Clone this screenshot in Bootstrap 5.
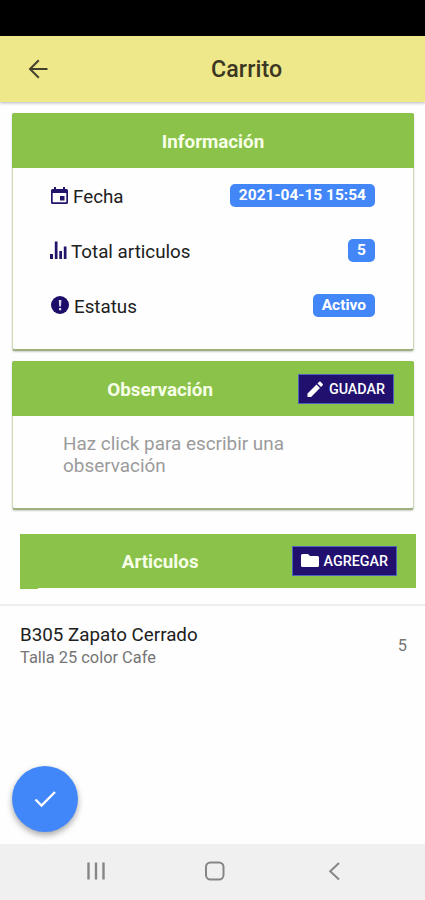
<!DOCTYPE html>
<html lang="es">
<head>
<meta charset="utf-8">
<meta name="viewport" content="width=device-width, initial-scale=1">
<title>Carrito</title>
<link href="https://cdn.jsdelivr.net/npm/bootstrap@5.3.0/dist/css/bootstrap.min.css" rel="stylesheet">
<style>
body{font-family:Roboto,"Liberation Sans",sans-serif;color:#202020;background:#fefefe;width:425px;height:900px;overflow:hidden;line-height:22px}
svg{display:block;flex:none}
.status{height:36px;background:#000}
.topbar{height:66px;background:#eee88b;box-shadow:0 1px 3px rgba(70,70,90,.4);padding:0 28px}
.topbar h1{font-size:23.2px;font-weight:500;color:#3c3722;margin:2px 0 0 163px;letter-spacing:.1px}
.panel{margin:0 11px 0 12px;border:1px solid #cfdbb4;border-bottom:2px solid #9fb07f;border-radius:3px;background:#fefefe;box-shadow:0 1px 2px rgba(0,0,0,.2)}
#info{height:238px;margin-top:11px}
#obs{margin-top:10px}
.strip{height:54px;background:#8bc34a;color:#f8ffe9;font-size:18.8px;font-weight:700}
.panel .strip{margin:-1px -1px 0;border-radius:2px 2px 0 0;width:402px;height:55px;padding-top:2px}
.strip-title{margin-right:85px}
.articles .strip-title{margin-right:93px;padding-top:1px}
.strip .action{margin-right:20px;gap:5px}
.panel .action{margin-top:-1px}
.articles .action{margin-right:19px}
.info-row{height:55px;padding:2px 38px 0 37px;font-size:18.8px}
.tag{background:#4286f8;border-radius:5px;font-size:15.5px;font-weight:700;line-height:23px;height:23px;padding:0 9px;margin-bottom:2px}
.action{background:#22106f;border:1.5px solid #4b63bd;border-radius:0;height:30px;color:#fff;font-size:14.3px;font-weight:500;line-height:28px;padding:0 8px}
.action:hover{background:#22106f;color:#fff}
.note{height:92px;padding:17px 50px 0;font-size:18.9px;color:#9b9b9b}
.articles{margin:24px 9px 0 20px}
.lip{height:1px;width:18px;margin-left:20px;background:#8bc34a}
.line{height:2px;background:#eee;margin-top:15px}
.item{padding:18px 18px 0 20px}
.item-name{font-size:18.8px}
.item-sub{font-size:16.4px;color:#757575;line-height:24px}
.item>.item-sub{margin-bottom:2px}
.confirm{width:66px;height:66px;background:#4287f9;box-shadow:0 3px 6px rgba(0,0,0,.35);margin:0 0 12px 12px;border:0}
.sysbar{height:56px;background:#f0f0f0}
</style>
<script src="https://cdn.jsdelivr.net/npm/bootstrap@5.3.0/dist/js/bootstrap.bundle.min.js"></script>
</head>
<body class="d-flex flex-column">
<div class="status flex-shrink-0"></div>
<header class="topbar d-flex align-items-center flex-shrink-0">
  <svg width="20" height="20" viewBox="0 0 20 20" fill="none" stroke="#45402b" stroke-width="2"><path d="M19.5 10H2M10.8 1.2L2 10l8.800 8.800"/></svg>
  <h1>Carrito</h1>
</header>
<main class="d-flex flex-column flex-grow-1">
  <section class="panel" id="info">
    <div class="strip d-flex align-items-center justify-content-center">Información</div>
    <div class="info-body">
      <div class="info-row d-flex align-items-center justify-content-between">
        <div class="d-flex align-items-center"><svg class="me-1" width="19" height="22" viewBox="0 0 19 22"><path fill="#22136b" d="M4 1h2v2h7V1h2v2h1.500A1.500 1.500 0 0 1 18 4.500v12a1.500 1.500 0 0 1-1.500 1.500h-14A1.500 1.500 0 0 1 1 16.500v-12A1.500 1.500 0 0 1 2.500 3H4zM2.700 7v9.300h13.600V7zM10 10h4.500v4.500H10z"/></svg><span>Fecha</span></div>
        <span class="badge tag">2021-04-15 15:54</span>
      </div>
      <div class="info-row d-flex align-items-center justify-content-between">
        <div class="d-flex align-items-center"><svg width="21" height="22" viewBox="0 0 21 22"><path fill="#22136b" d="M0 13h3v5H0zM4.800 0.500h2.700v17.500H4.800zM9.300 10h2.700v8H9.300zM13.800 5.500h2.700V18h-2.700z"/></svg><span>Total articulos</span></div>
        <span class="badge tag">5</span>
      </div>
      <div class="info-row d-flex align-items-center justify-content-between">
        <div class="d-flex align-items-center"><svg width="24" height="22" viewBox="0 0 24 22"><circle cx="10" cy="9" r="9" fill="#1c0e68"/><path fill="#d9d5ec" d="M8.800 4h2.600l-.4 6.500H9.200zM9 12h2.200v2.200H9z"/></svg><span>Estatus</span></div>
        <span class="badge tag">Activo</span>
      </div>
    </div>
  </section>
  <section class="panel" id="obs">
    <div class="strip d-flex align-items-center justify-content-end">
      <span class="strip-title">Observación</span>
      <button class="btn action d-flex align-items-center"><svg width="17" height="17" viewBox="0 0 17 17"><path fill="#fff" d="M.5 12.500L9.500 3.500l3.500 3.500L4 16H.5zM10.500 2.500l1.700-1.700a1 1 0 0 1 1.400 0l2.100 2.100a1 1 0 0 1 0 1.400L14 6z"/></svg><span>GUADAR</span></button>
    </div>
    <div class="note">Haz click para escribir una observación</div>
  </section>
  <section>
    <div class="strip articles d-flex align-items-center justify-content-end">
      <span class="strip-title">Articulos</span>
      <button class="btn action d-flex align-items-center"><svg width="18" height="16" viewBox="0 0 18 16"><path fill="#fff" d="M1.500 1H7l2 2h7.500A1.500 1.500 0 0 1 18 4.500v8a1.500 1.500 0 0 1-1.500 1.500h-15A1.500 1.500 0 0 1 0 12.500v-10A1.500 1.500 0 0 1 1.500 1z"/></svg><span>AGREGAR</span></button>
    </div>
    <div class="lip"></div>
    <div class="line"></div>
    <div class="item d-flex align-items-center justify-content-between">
      <div><div class="item-name">B305 Zapato Cerrado</div><div class="item-sub">Talla 25 color Cafe</div></div>
      <span class="item-sub">5</span>
    </div>
  </section>
  <button class="confirm rounded-circle d-flex align-items-center justify-content-center mt-auto"><svg width="24" height="20" viewBox="0 0 24 20" fill="none" stroke="#fff" stroke-width="2.300"><path d="M2.500 10.500l6 6L22 3"/></svg></button>
</main>
<footer class="sysbar d-flex flex-shrink-0 align-items-center">
  <svg width="425" height="56" viewBox="0 0 425 56" fill="none" stroke="#868686" stroke-width="2"><path d="M88.500 18.500v17M96 18.500v17M103.500 18.500v17" stroke-width="2.400"/><rect x="206" y="18.500" width="17.500" height="17" rx="4.500"/><path d="M339 19l-8.800 8.300L339 35.500"/></svg>
</footer>
</body>
</html>
